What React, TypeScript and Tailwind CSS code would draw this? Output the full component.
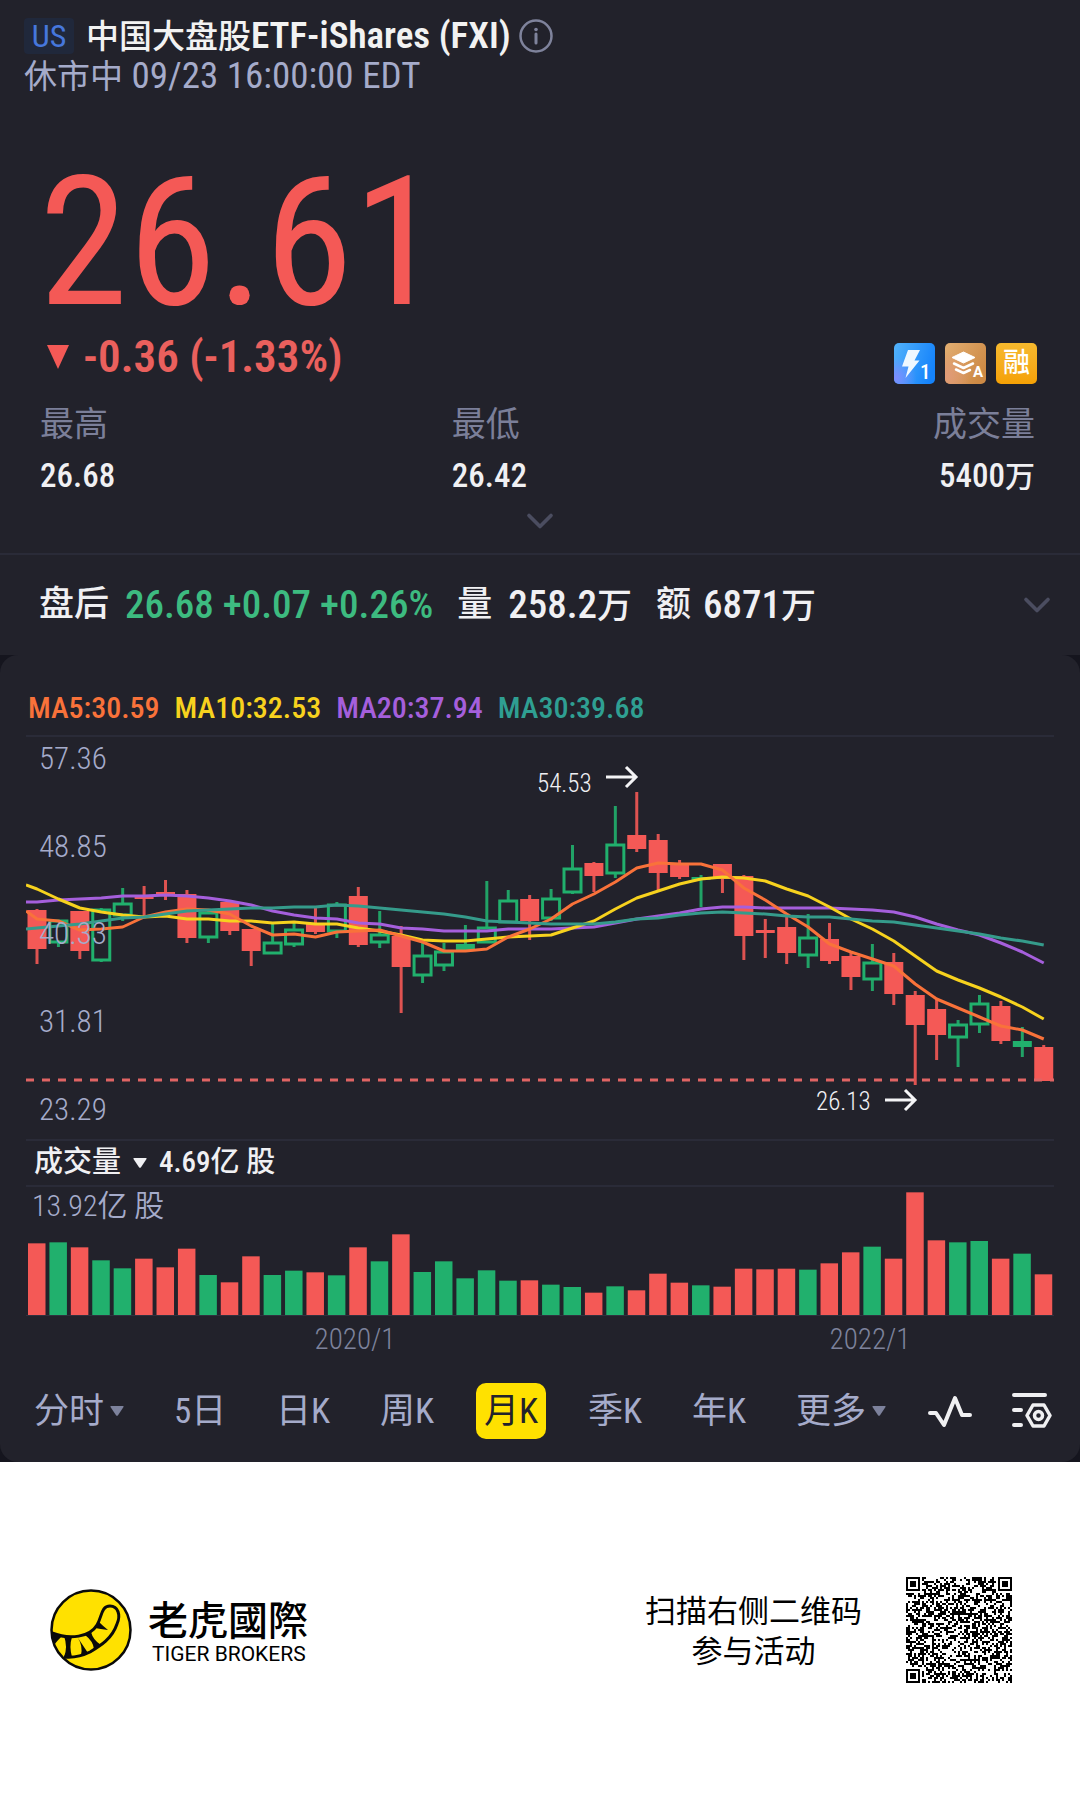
import { ChevronDown } from 'lucide-react';

type Candle = [up: number, high: number, top: number, bottom: number, low: number];

const FIRST = 37;
const PITCH = 21.42;
const centre = (i: number) => FIRST + PITCH * i;

const candles: Candle[] = [
  [0, 910, 911, 950, 965], [1, 921, 921, 944, 948], [0, 912, 912, 952, 960], [1, 909, 910, 962, 963],
  [1, 889, 904, 917, 922], [0, 887, 898, 900, 917], [0, 881, 893, 895, 901], [0, 891, 895, 939, 944],
  [1, 912, 913, 939, 944], [0, 903, 903, 932, 936], [0, 930, 930, 952, 967], [1, 925, 943, 955, 955],
  [1, 924, 930, 946, 948], [0, 909, 925, 933, 935], [1, 903, 905, 933, 939], [0, 888, 897, 946, 948],
  [1, 912, 935, 944, 949], [0, 927, 937, 968, 1014], [1, 944, 956, 977, 984], [1, 944, 952, 967, 972],
  [1, 926, 945, 951, 951], [1, 882, 928, 944, 944], [1, 891, 901, 924, 924], [0, 896, 900, 922, 941],
  [1, 890, 899, 920, 922], [1, 846, 869, 894, 895], [0, 863, 864, 877, 893], [1, 807, 845, 875, 879],
  [0, 793, 836, 850, 853], [0, 835, 841, 874, 892], [0, 861, 864, 878, 880], [1, 876, 878, 881, 908],
  [0, 865, 865, 880, 894], [0, 876, 877, 937, 961], [0, 920, 931, 934, 959], [0, 917, 928, 954, 965],
  [1, 915, 938, 957, 969], [0, 924, 940, 962, 965], [0, 953, 957, 978, 991], [1, 945, 963, 981, 992],
  [0, 954, 963, 995, 1006], [0, 992, 996, 1026, 1086], [0, 1000, 1010, 1036, 1061], [1, 1021, 1025, 1039, 1068],
  [1, 996, 1004, 1026, 1034], [0, 1002, 1007, 1042, 1045], [1, 1028, 1042, 1048, 1058], [0, 1046, 1048, 1082, 1082],
];

const averages = [
  {
    color: '#a55fdc', label: 'MA20:37.94', text: 'text-[#a55fdc]', start: 903,
    values: [903, 901, 900, 899, 897, 897, 896, 897, 899, 902, 906, 912, 916, 919, 920, 924, 925, 929, 930, 932, 932, 932, 930, 930, 930, 929, 928, 924, 920, 917, 914, 910, 908, 908, 909, 909, 909, 909, 910, 911, 913, 918, 925, 931, 936, 944, 953, 964],
  },
  {
    color: '#f7d21e', label: 'MA10:32.53', text: 'text-[#f7d21e]', start: 886,
    values: [890, 900, 909, 913, 916, 918, 917, 920, 920, 922, 922, 924, 923, 925, 925, 929, 932, 936, 941, 942, 942, 940, 938, 937, 936, 929, 922, 910, 899, 892, 885, 880, 878, 879, 882, 890, 897, 908, 920, 930, 942, 957, 972, 981, 989, 998, 1008, 1020],
  },
  {
    color: '#f9723a', label: 'MA5:30.59', text: 'text-[#f9723a]', start: 912,
    values: [920, 922, 931, 930, 928, 918, 913, 910, 911, 915, 927, 936, 935, 938, 933, 932, 931, 937, 943, 952, 952, 950, 938, 930, 920, 905, 895, 883, 869, 864, 865, 865, 871, 889, 901, 915, 928, 945, 953, 960, 967, 985, 1000, 1009, 1018, 1027, 1031, 1040],
  },
  {
    color: '#359b8b', label: 'MA30:39.68', text: 'text-[#2f9f92]', start: 930,
    values: [929, 927, 925, 922, 919, 918, 915, 912, 911, 910, 909, 909, 908, 908, 906, 907, 909, 911, 913, 915, 918, 922, 923, 924, 925, 925, 925, 923, 920, 919, 916, 914, 913, 914, 915, 917, 918, 918, 920, 922, 923, 926, 929, 932, 935, 939, 942, 946],
  },
];

const volumes = [
  215, 218, 203, 164, 140, 169, 143, 199, 120, 98, 176, 120, 133, 128, 119, 203, 161, 242, 129, 161, 110, 134, 103, 104,
  91, 84, 67, 86, 74, 124, 97, 89, 85, 139, 137, 139, 136, 155, 188, 205, 169, 368, 224, 218, 222, 169, 184, 122,
];

const RED = '#f45956';
const GREEN = '#21b06d';

function CandleChart() {
  return (
    <svg viewBox="26 738 1028 402" className="block h-auto w-full" role="img" aria-label="月K">
      {candles.map(([up, high, top, bottom, low], i) => {
        const x = centre(i);
        const c = up ? GREEN : RED;
        return (
          <g key={i} stroke={c} strokeWidth="3">
            <path d={`M${x} ${high}V${top}M${x} ${bottom}V${low}`} opacity="0.9" />
            {up && bottom - top > 6 ? (
              <rect x={x - 8.5} y={top + 1} width="17" height={bottom - top - 2} fill="none" />
            ) : (
              <rect x={x - 9.5} y={top} width="19" height={bottom - top} fill={c} stroke="none" />
            )}
          </g>
        );
      })}
      {averages.map((a) => (
        <polyline
          key={a.label}
          points={`26,${a.start} ` + a.values.map((v, i) => `${centre(i)},${v}`).join(' ')}
          fill="none"
          stroke={a.color}
          strokeWidth="3"
          strokeLinejoin="round"
        />
      ))}
      <path d="M26 1081H1054" stroke="#e06464" strokeWidth="3" strokeDasharray="8 8" />
      <g fill="#a5abca" fontSize="31" fontWeight="300">
        {['57.36', '48.85', '40.33', '31.81', '23.29'].map((t, i) => (
          <text key={t} x="39" y={Math.round(770 + i * 87.7)}>{t}</text>
        ))}
      </g>
      <g fill="#f0f0f4" fontSize="25" fontWeight="300">
        <text x="537" y="793">54.53</text>
        <text x="816" y="1111">26.13</text>
      </g>
      <g fill="none" stroke="#f4f4f6" strokeWidth="3">
        <path d="M606 778H635M626 768L636 778L626 788" />
        <path d="M885 1101H914M905 1091L915 1101L905 1111" />
      </g>
    </svg>
  );
}

function VolumeChart() {
  return (
    <svg viewBox="26 1188 1028 170" className="block h-auto w-full" role="img" aria-label="成交量">
      <path d="M26 1316.5H1054" stroke="#30313f" />
      {volumes.map((v, i) => (
        <rect key={i} x={centre(i) - 9} y={1316 - v / 3} width="17.5" height={v / 3} fill={candles[i][0] ? GREEN : RED} />
      ))}
      <text x="32" y="1217" fill="#a5abca" fontSize="30" fontWeight="350">13.92亿 股</text>
      <g fill="#7d829c" fontSize="29" fontWeight="300" textAnchor="middle">
        <text x="355" y="1350">2020/1</text>
        <text x="870" y="1350">2022/1</text>
      </g>
    </svg>
  );
}

function Triangle({ className }: { className: string }) {
  return (
    <svg viewBox="0 0 14 10" className={className} fill="currentColor" aria-hidden="true">
      <path d="M1 0H13Q14 0 13.500 1L8 9.300Q7 10.300 6 9.300L.500 1Q0 0 1 0Z" />
    </svg>
  );
}

function Badges() {
  return (
    <div className="flex gap-2.5 pb-0.5">
      <svg viewBox="0 0 41 41" className="size-[41px]" role="img" aria-label="Level 1">
        <defs>
          <linearGradient id="blue" x1="0" y1="0.2" x2="1" y2="0.5">
            <stop offset="0" stopColor="#4fb0fb" />
            <stop offset="1" stopColor="#1583fb" />
          </linearGradient>
          <radialGradient id="violet" cx="0.05" cy="0.85" r="0.5">
            <stop offset="0" stopColor="#7d8cff" />
            <stop offset="1" stopColor="#7d8cff" stopOpacity="0" />
          </radialGradient>
        </defs>
        <rect width="41" height="41" rx="5" fill="url(#blue)" />
        <rect width="41" height="41" rx="5" fill="url(#violet)" />
        <path d="M14 7H26L20.500 17.500H25.500L11.500 35L14.500 23.500H8Z" fill="#eff8ff" />
        <text x="26" y="36" fontSize="21" fontWeight="500" fill="#fff">1</text>
      </svg>
      <svg viewBox="0 0 41 41" className="size-[41px]" role="img" aria-label="A">
        <defs>
          <linearGradient id="bronze" x1="0" y1="0" x2="1" y2="0.6">
            <stop offset="0" stopColor="#e2ae72" />
            <stop offset="1" stopColor="#cd8a45" />
          </linearGradient>
          <radialGradient id="rose" cx="0.05" cy="0.8" r="0.6">
            <stop offset="0" stopColor="#e09a78" />
            <stop offset="1" stopColor="#e09a78" stopOpacity="0" />
          </radialGradient>
        </defs>
        <rect width="41" height="41" rx="5" fill="url(#bronze)" />
        <rect width="41" height="41" rx="5" fill="url(#rose)" />
        <path d="M18.500 9L30 14.500L18.500 20L7 14.500Z" fill="#fff" stroke="#fff" strokeLinejoin="round" />
        <path d="M9 20.500L18.500 25L28 20.500M11 26.500L18.500 30L25 27" fill="none" stroke="#fff" strokeWidth="2.500" strokeLinecap="round" strokeLinejoin="round" />
        <text x="28" y="34" fontSize="15" fontWeight="700" fill="#fff" fontFamily="Roboto">A</text>
      </svg>
      <span className="flex size-[41px] items-center justify-center rounded-[5px] bg-linear-to-b from-[#f6b92d] to-[#f5a104] text-[27px] leading-none font-medium text-white">融</span>
    </div>
  );
}

function TigerLogo() {
  return (
    <svg viewBox="0 0 82 82" className="size-[82px]" role="img" aria-label="Tiger Brokers">
      <circle cx="41" cy="41" r="39.500" fill="#ffe100" stroke="#0a0a0a" strokeWidth="2.500" />
      <path
        d="M2 44C20 51 40 48 47 36C52 28 51 17 60 17C68 17 71 26 67 35C62 50 50 57 40 63C32 67 23 69 14 68"
        fill="none" stroke="#0a0a0a" strokeWidth="3"
      />
      <path
        d="M1 43L12 47Q7 52 4 56ZM14 47L22 48Q19 57 22 68L14 68Q18 58 14 47ZM28 49L38 64L31 66Q33 57 28 49ZM35 46L41 43Q43 51 51 56L44 60Q43 52 35 46ZM45 39L49 33Q53 37 58 41Q50 40 45 39Z"
        fill="#0a0a0a"
      />
    </svg>
  );
}

const QR = 53;

function qrPath() {
  let d = '';
  let seed = 90210;
  const finder = (x: number, y: number) => {
    for (const [ox, oy] of [[0, 0], [QR - 7, 0], [0, QR - 7]]) {
      const dx = x - ox;
      const dy = y - oy;
      if (dx >= -1 && dx <= 7 && dy >= -1 && dy <= 7) {
        const ring = Math.max(Math.abs(dx - 3), Math.abs(dy - 3));
        return ring === 3 || ring <= 1 ? 1 : 0;
      }
    }
    return -1;
  };
  for (let y = 0; y < QR; y++) {
    for (let x = 0; x < QR; x++) {
      seed = (seed * 1103515245 + 12345) % 2147483648;
      const f = finder(x, y);
      if (f === 1 || (f === -1 && seed / 2147483648 > 0.5)) d += `M${x} ${y}h1v1h-1z`;
    }
  }
  return d;
}

function QrCode() {
  return (
    <svg viewBox={`0 0 ${QR} ${QR}`} className="size-[106px]" shapeRendering="crispEdges" role="img" aria-label="二维码">
      <path d={qrPath()} fill="#000" />
    </svg>
  );
}

function Stat({ label, value, unit, right }: { label: string; value: string; unit?: string; right?: boolean }) {
  return (
    <div className={right ? 'text-right' : ''}>
      <dt className="text-[34px] leading-10 text-[#7b7f99]">{label}</dt>
      <dd className="mt-3 text-[33px] leading-10 font-medium text-[#f0f0f3]">
        {value}
        {unit && <span className="text-[30px]">{unit}</span>}
      </dd>
    </div>
  );
}

function Tab({ label, menu, active }: { label: string; menu?: boolean; active?: boolean }) {
  return (
    <button
      type="button"
      aria-pressed={!!active}
      className={
        active
          ? '-mx-2 h-14 rounded-[10px] bg-[#ffe100] px-2 whitespace-nowrap text-[#22222b]'
          : 'flex h-14 items-center gap-1.5 whitespace-nowrap'
      }
    >
      {label}
      {menu && <Triangle className="h-2.5 w-3.5 text-[#7d829c]" />}
    </button>
  );
}

export default function App() {
  return (
    <div className="flex min-h-screen flex-col bg-white font-['Roboto_Condensed','Noto_Sans_CJK_SC',sans-serif]">
      <main className="bg-[#15151e]">
        <section className="bg-[#22222b]">
          <header className="px-6 pt-[18px]">
            <div className="flex h-9 items-center">
              <span className="flex h-9 w-[50px] items-center justify-center rounded bg-[#20283b] text-[32px] leading-none text-[#4677dc]">US</span>
              <h1 className="ml-3 text-[33px] leading-9 font-medium text-[#f2f2f2]">
                中国大盘股<span className="text-[37px] font-semibold">ETF-iShares (FXI)</span>
              </h1>
              <button type="button" aria-label="info" className="ml-2">
                <svg viewBox="0 0 34 34" className="size-[34px]" fill="none" stroke="#7f839c">
                  <circle cx="17" cy="17" r="15.500" strokeWidth="2.500" />
                  <path d="M17 15V24" strokeWidth="3" strokeLinecap="round" />
                  <circle cx="17" cy="10.500" r="1.800" fill="#7f839c" stroke="none" />
                </svg>
              </button>
            </div>
            <p className="mt-0.5 text-[37px] leading-10 text-[#a5abca]"><span className="text-[33px]">休市中</span> 09/23 16:00:00 EDT</p>
          </header>

          <div className="pt-[61px] pr-[43px] pl-[39px]">
            <p className="text-[180px] leading-[170px] text-[#f45956]">26.61</p>
            <div className="flex items-end justify-between">
              <p className="flex items-center pl-1 text-[45px] leading-[58px] font-semibold text-[#ea605d]">
                <svg viewBox="0 0 22 24" className="mr-3.5 ml-1 h-6 w-[22px]" fill="#f45956" aria-hidden="true">
                  <path d="M0 0H22L11 24Z" />
                </svg>
                -0.36 (-1.33%)
              </p>
              <Badges />
            </div>
          </div>

          <dl className="mt-[18px] grid grid-cols-[12fr_12fr_5fr] pr-[45px] pl-10">
            <Stat label="最高" value="26.68" />
            <Stat label="最低" value="26.42" />
            <Stat label="成交量" value="5400" unit="万" right />
          </dl>
          <div className="flex h-14 justify-center">
            <button type="button" aria-label="展开" className="pb-2">
              <ChevronDown className="size-11 text-[#4b4d60]" strokeWidth={2} />
            </button>
          </div>

          <div className="flex h-[102px] items-center border-t-2 border-[#2a2b38] pr-[21px] pl-[39px] text-[39px] font-medium whitespace-nowrap text-[#f0f0f3]">
            <span className="text-[35px]">盘后</span>
            <span className="ml-4 text-[#3dbb80]">26.68 +0.07 +0.26%</span>
            <span className="ml-6 text-[35px]">量</span>
            <span className="ml-4">258.2<span className="text-[35px]">万</span></span>
            <span className="ml-6 text-[35px]">额</span>
            <span className="ml-3">6871<span className="text-[35px]">万</span></span>
            <button type="button" aria-label="展开盘后" className="ml-auto">
              <ChevronDown className="size-11 text-[#4b4d60]" strokeWidth={2} />
            </button>
          </div>
        </section>

        <section className="rounded-[18px] bg-[#22222b] px-[26px] pt-8 pb-[23px]">
          <div className="flex h-[50px] gap-[15px] border-b-2 border-[#2a2b38] pl-0.5 text-[30px] leading-[42px] font-medium whitespace-nowrap">
            {[2, 1, 0, 3].map((k) => averages[k]).map((a) => (
              <span key={a.label} className={a.text}>{a.label}</span>
            ))}
          </div>
          <CandleChart />
          <div className="flex h-12 items-center border-y-2 border-[#2a2b38] pl-2 text-[29px] font-medium text-[#f0f0f3]">
            <button type="button" className="flex items-center gap-3">
              成交量
              <Triangle className="h-2.5 w-3.5" />
            </button>
            <span className="ml-3">4.69亿 股</span>
          </div>
          <VolumeChart />
          <nav className="mt-[26px] flex items-center pr-0.5 pl-2 text-[35px] leading-none text-[#a5abca]">
            <div className="flex flex-1 items-center justify-between">
              <Tab label="分时" menu />
              <Tab label="5日" />
              <Tab label="日K" />
              <Tab label="周K" />
              <Tab label="月K" active />
              <Tab label="季K" />
              <Tab label="年K" />
              <Tab label="更多" menu />
            </div>
            <div className="ml-[42px] flex items-center gap-10">
              <button type="button" aria-label="指标">
                <svg viewBox="0 0 44 34" className="h-[34px] w-11" fill="none" stroke="#f0f0f2" strokeWidth="4" strokeLinecap="round" strokeLinejoin="round">
                  <path d="M2 19H8L16 31L27 4L34 21H42" />
                </svg>
              </button>
              <button type="button" aria-label="设置">
                <svg viewBox="0 0 40 38" className="h-[38px] w-10" fill="none" stroke="#f0f0f2" strokeWidth="4" strokeLinecap="round" strokeLinejoin="round">
                  <path d="M2 3H33M2 18H9M2 33H9" />
                  <path d="M21 13H32L38 23.500L32 34H21L15 23.500Z" strokeWidth="3.500" />
                  <circle cx="26.500" cy="23.500" r="4" strokeWidth="3.500" />
                </svg>
              </button>
            </div>
          </nav>
        </section>
      </main>

      <footer className="flex items-center justify-between pt-[115px] pr-[68px] pl-[50px] text-black">
        <div className="flex items-center gap-4">
          <TigerLogo />
          <div>
            <p lang="zh-Hant" className="font-['Noto_Sans_CJK_TC',sans-serif] text-[40px] leading-[48px] font-medium">老虎國際</p>
            <p className="pl-1 font-[Roboto,sans-serif] text-[21px] leading-6">TIGER BROKERS</p>
          </div>
        </div>
        <div className="flex items-center gap-11">
          <p className="pt-1 text-center text-[31px] leading-10">扫描右侧二维码<br />参与活动</p>
          <QrCode />
        </div>
      </footer>
    </div>
  );
}
